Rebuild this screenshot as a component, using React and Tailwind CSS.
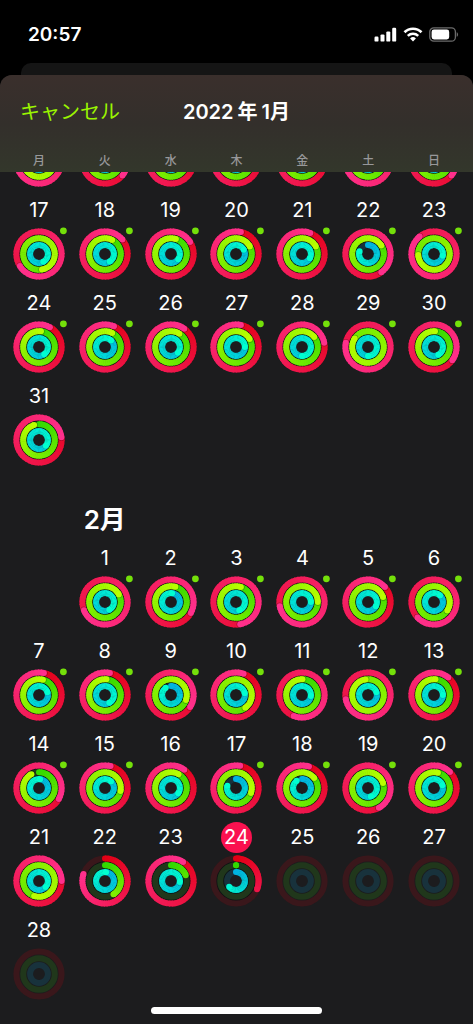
const WEEKDAYS = ['月', '火', '水', '木', '金', '土', '日']

// rings: [move, exercise, stand] in turns of the ring
const PREVIOUS_WEEK = [
  [1.75, 1.7, 1.3],
  [1.36, 1.1, 1.3],
  [1.1, 1.15, 1.3],
  [1.1, 1.2, 1.3],
  [1.15, 1.2, 1.3],
  [1.75, 1.1, 1.3],
  [1.36, 1.2, 1.3],
]

const JANUARY = [
  { day: 17, rings: [1.66, 1.47, 1.42], workout: true },
  { day: 18, rings: [1.14, 1.075, 1.41], workout: true },
  { day: 19, rings: [1.16, 1.05, 1.35], workout: true },
  { day: 20, rings: [1.035, 1.17, 1.17], workout: true },
  { day: 21, rings: [1.06, 1.17, 1.33], workout: true },
  { day: 22, rings: [1.4, 1.16, 0.8], workout: true },
  { day: 23, rings: [1.89, 1.74, 1.28], workout: true },
  { day: 24, rings: [1.08, 1.02, 1.4], workout: true },
  { day: 25, rings: [1.065, 1.075, 1.12], workout: true },
  { day: 26, rings: [1.1, 1.09, 1.36], workout: true },
  { day: 27, rings: [1.035, 1.165, 1.25], workout: true },
  { day: 28, rings: [1.22, 1.14, 1.5], workout: true },
  { day: 29, rings: [1.78, 1.84, 1.5], workout: true },
  { day: 30, rings: [1.35, 1.01, 1.42], workout: true },
  { day: 31, rings: [1.23, 0.95, 1.36] },
]

const FEBRUARY = [
  { day: 1, rings: [1.69, 1.17, 1.42], workout: true },
  { day: 2, rings: [1.33, 1.045, 1.02], workout: true },
  { day: 3, rings: [1.47, 1.05, 1.44], workout: true },
  { day: 4, rings: [1.72, 1.25, 1.25], workout: true },
  { day: 5, rings: [1.135, 1.2, 1.33], workout: true },
  { day: 6, rings: [1.63, 1.34, 1.12], workout: true },
  { day: 7, rings: [1.035, 1.04, 1.2], workout: true },
  { day: 8, rings: [1.035, 1.015, 1.42], workout: true },
  { day: 9, rings: [1.34, 1.3, 0.9], workout: true },
  { day: 10, rings: [1.055, 1.4, 1.22], workout: true },
  { day: 11, rings: [1.56, 1.005, 1.27], workout: true },
  { day: 12, rings: [1.72, 1.975, 1.2], workout: true },
  { day: 13, rings: [1.11, 1.015, 1.25], workout: true },
  { day: 14, rings: [1.33, 0.92, 1.02], workout: true },
  { day: 15, rings: [1.04, 1.28, 1.12], workout: true },
  { day: 16, rings: [1.1, 1.08, 1.35] },
  { day: 17, rings: [1.03, 1.3, 0.79], workout: true },
  { day: 18, rings: [1.05, 1.14, 0.9], workout: true },
  { day: 19, rings: [1.42, 1.2, 1.45], workout: true },
  { day: 20, rings: [1.125, 1.04, 1.2], workout: true },
  { day: 21, rings: [1.25, 1.55, 1.37] },
  { day: 22, rings: [0.8, 0.41, 1.02] },
  { day: 23, rings: [1.09, 0.19, 1.27] },
  { day: 24, rings: [0.31, 0.001, 0.64], today: true },
  { day: 25, rings: [0, 0, 0] },
  { day: 26, rings: [0, 0, 0] },
  { day: 27, rings: [0, 0, 0] },
  { day: 28, rings: [0, 0, 0] },
]

const RINGS = [
  { r: 22.6, from: [226, 0, 20], to: [255, 48, 140], track: '#3a171b', shadow: 0.26 },
  { r: 15.8, from: [50, 217, 0], to: [184, 255, 0], track: '#20371b', shadow: 0.26 },
  { r: 8.9, from: [0, 178, 226], to: [0, 255, 208], track: '#18323c', shadow: 0.1 },
]

const STROKE = 6
const STEPS = 48

function mix(from, to, t) {
  return `rgb(${from.map((c, i) => Math.round(c + (to[i] - c) * t)).join(',')})`
}

function point(r, turn) {
  const a = turn * Math.PI * 2
  return [r * Math.sin(a), -r * Math.cos(a)]
}

function Ring({ r, from, to, track, shadow, value }) {
  const start = Math.max(0, value - 1)
  const span = value - start
  // short arcs only get part of the way through the gradient
  const full = Math.max(value, 0.7)
  const segments = []
  if (value > 0) {
    for (let i = 0; i < STEPS; i++) {
      const a = start + (span * i) / STEPS
      const b = start + (span * (i + 1)) / STEPS
      const [x1, y1] = point(r, a)
      const [x2, y2] = point(r, Math.min(b + 0.006, value))
      segments.push(
        <path
          key={i}
          d={`M${x1} ${y1}A${r} ${r} 0 0 1 ${x2} ${y2}`}
          stroke={mix(from, to, b / full)}
        />
      )
    }
  }
  const [hx, hy] = point(r, value)
  const [sx, sy] = point(r, value + 0.8 / (2 * Math.PI * r))
  const [tx, ty] = point(r, 0)

  return (
    <g fill="none" strokeWidth={STROKE}>
      <circle r={r} stroke={track} />
      {value > 0 && value < 1 && (
        <circle cx={tx} cy={ty} r={STROKE / 2} fill={mix(from, to, 0)} />
      )}
      {segments}
      {value > 0.85 && <circle cx={sx} cy={sy} r={STROKE / 2} fill="#000" opacity={shadow} />}
      {value > 0 && (
        <circle cx={hx} cy={hy} r={STROKE / 2} fill={mix(from, to, value / full)} />
      )}
    </g>
  )
}

function ActivityRings({ values, workout }) {
  return (
    <svg className="w-[52px] h-[52px] overflow-visible" viewBox="-26 -26 52 52" aria-hidden="true">
      {values[0] > 0 && <circle r="25" fill="#0c1214" />}
      <circle r="6" fill="#1c1c1e" />
      {RINGS.map((ring, i) => (
        <Ring key={ring.r} {...ring} value={values[i]} />
      ))}
      {workout && <circle cx="24.4" cy="-23.2" r="3.4" fill="#74e00a" />}
    </svg>
  )
}

function Day({ day, rings, workout, today }) {
  return (
    <button type="button" className="flex flex-col items-center gap-[2px] mb-2">
      <span
        className={`flex items-center justify-center w-[31px] h-[31px] pb-px rounded-full text-xl leading-none ${
          today ? 'bg-[#fa114f]' : ''
        }`}
      >
        {day}
      </span>
      <ActivityRings values={rings} workout={workout} />
    </button>
  )
}

function Month({ days, offset = 0 }) {
  return (
    <div className="grid grid-cols-7">
      {offset > 0 && <div />}
      {days.map((d) => (
        <Day key={d.day} {...d} />
      ))}
    </div>
  )
}

function StatusBar() {
  return (
    <div className="flex items-center justify-between h-[63px] pl-7 pr-[14px] pt-[6px]">
      <span className="text-[19px] leading-6 font-semibold">20:57</span>
      <div className="flex items-center gap-[6px]">
        <svg className="w-[23px] h-[15px]" viewBox="0 0 23 15" fill="#fff">
          <rect x="0.5" y="9.6" width="4" height="5" rx="1.2" />
          <rect x="6.5" y="7.4" width="4" height="7.2" rx="1.2" />
          <rect x="12.3" y="4.4" width="4" height="10.2" rx="1.2" />
          <rect x="18.2" y="0.8" width="4" height="13.8" rx="1.2" />
        </svg>
        <svg className="w-5 h-[15px]" viewBox="0 0 20 15">
          <path d="M1.5 5.3a12 12 0 0 1 17 0" fill="none" stroke="#fff" strokeWidth="2.7" />
          <path d="M4.8 8.8a7.4 7.4 0 0 1 10.4 0" fill="none" stroke="#fff" strokeWidth="2.5" />
          <path d="M10 14.4l-2.9-2.9a4.1 4.1 0 0 1 5.8 0z" fill="#fff" />
        </svg>
        <svg className="w-[30px] h-[15px]" viewBox="0 0 30 15">
          <rect x="0.8" y="0.8" width="25.6" height="13.4" rx="4" fill="none" stroke="#6b6b6b" strokeWidth="1.3" />
          <rect x="2.6" y="2.6" width="17.6" height="9.8" rx="2.4" fill="#fff" />
          <path d="M27.7 5.2c1.8.6 1.8 4 0 4.6z" fill="#6b6b6b" />
        </svg>
      </div>
    </div>
  )
}

export default function App() {
  return (
    <div className="min-h-screen flex flex-col bg-black text-white font-['Inter','Noto_Sans_CJK_JP',sans-serif]">
      <StatusBar />
      <div className="h-3 mx-[21px] rounded-t-[10px] bg-[#151515]" />

      <div className="flex-1 flex flex-col rounded-t-xl overflow-hidden bg-[#1c1c1e]">
        <header className="relative z-10 px-[6px] bg-linear-to-b from-[#3a2f2c] via-[#332f2b] to-[#33372b]">
          <div className="grid grid-cols-[1fr_auto_1fr] items-center h-[74px] px-[14px]">
            <button type="button" className="justify-self-start text-xl text-[#9bf500]">
              キャンセル
            </button>
            <h1 className="text-xl font-semibold">
              2022<span className="mx-1">年</span>1月
            </h1>
          </div>
          <div className="grid grid-cols-7 h-[23px] text-center text-xs leading-6 font-medium text-[#98989a]">
            {WEEKDAYS.map((w) => (
              <span key={w}>{w}</span>
            ))}
          </div>
        </header>

        <main className="flex-1 overflow-hidden px-[6px]">
          <div className="-mt-[37px]">
            <div className="grid grid-cols-7 justify-items-center mb-2">
              {PREVIOUS_WEEK.map((values, i) => (
                <ActivityRings key={i} values={values} />
              ))}
            </div>
            <Month days={JANUARY} />
            <div className="grid grid-cols-7 pt-7 pb-[5px]">
              <h2 className="col-start-2 text-center whitespace-nowrap text-[26px] leading-9 font-semibold">
                2月
              </h2>
            </div>
            <Month days={FEBRUARY} offset={1} />
          </div>
        </main>
      </div>

      <div className="fixed bottom-[10px] inset-x-0 z-20 flex justify-center">
        <div className="w-[36%] h-[7px] rounded-full bg-white" />
      </div>
    </div>
  )
}
